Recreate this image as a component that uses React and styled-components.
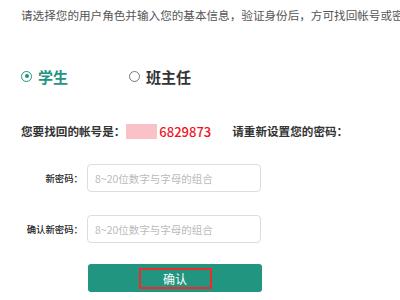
import React, { useState } from "react";
import styled, { createGlobalStyle } from "styled-components";

const GlobalStyle = createGlobalStyle`
  html, body {
    margin: 0;
    padding: 0;
    background: #fff;
  }
  body {
    font-family: "Noto Sans CJK SC", "Noto Sans", sans-serif;
    color: #333;
  }
`;

export default function App() {
  const [role, setRole] = useState("student");

  return (
    <>
      <GlobalStyle />
      <Page>
        <Intro>请选择您的用户角色并输入您的基本信息，验证身份后，方可找回帐号或密码。</Intro>

        <RoleRow>
          <RoleOption active={role === "student"} onClick={() => setRole("student")}>
            <Radio active={role === "student"} />
            学生
          </RoleOption>
          <RoleOption active={role === "teacher"} onClick={() => setRole("teacher")}>
            <Radio active={role === "teacher"} />
            班主任
          </RoleOption>
        </RoleRow>

        <AccountRow>
          <span>您要找回的帐号是：</span>
          <Account>
            <Masked />
            6829873
          </Account>
          <span>请重新设置您的密码：</span>
        </AccountRow>

        <Form>
          <Field>
            <Label>新密码：</Label>
            <Input type="password" placeholder="8~20位数字与字母的组合" />
          </Field>
          <Field>
            <Label>确认新密码：</Label>
            <Input type="password" placeholder="8~20位数字与字母的组合" />
          </Field>
          <SubmitRow>
            <Submit>
              <Highlight>确认</Highlight>
            </Submit>
          </SubmitRow>
        </Form>
      </Page>
    </>
  );
}

const Page = styled.div`
  width: 400px;
  height: 300px;
  overflow: hidden;
  padding: 7px 0 0 21px;
  box-sizing: border-box;
`;

const Intro = styled.p`
  margin: 0;
  font-size: 11.6px;
  line-height: 16px;
  color: #555;
  white-space: nowrap;
`;

const RoleRow = styled.div`
  display: flex;
  align-items: center;
  margin-top: 43px;
  height: 20px;
`;

const RoleOption = styled.label`
  display: flex;
  align-items: center;
  width: 108px;
  font-size: 15px;
  font-weight: 700;
  color: ${(p) => (p.active ? "#21957f" : "#333")};
  cursor: pointer;
`;

const Radio = styled.span`
  box-sizing: border-box;
  width: 11px;
  height: 11px;
  border-radius: 50%;
  border: 1.5px solid ${(p) => (p.active ? "#21957f" : "#777")};
  margin-right: 6px;
  display: flex;
  align-items: center;
  justify-content: center;
  &::after {
    content: "";
    width: 4px;
    height: 4px;
    border-radius: 50%;
    background: ${(p) => (p.active ? "#21957f" : "transparent")};
  }
`;

const AccountRow = styled.div`
  display: flex;
  align-items: center;
  margin-top: 37px;
  height: 16px;
  font-size: 11.6px;
  font-weight: 700;
  color: #333;
  white-space: nowrap;
`;

const Account = styled.span`
  display: flex;
  align-items: center;
  color: #f0141e;
  font-size: 13px;
  font-weight: 500;
  margin-right: 21px;
`;

const Masked = styled.span`
  display: inline-block;
  width: 31px;
  height: 15px;
  margin: 0 2px 0 1px;
  background: #f9c2c8;
  filter: blur(0.6px);
`;

const Form = styled.div`
  display: flex;
  flex-direction: column;
  margin-top: 25px;
  margin-left: -21px;
`;

const Field = styled.div`
  display: flex;
  align-items: center;
  gap: 4px;
  margin-bottom: 23px;
`;

const Label = styled.span`
  width: 83px;
  text-align: right;
  font-size: 9.4px;
  font-weight: 500;
  color: #222;
`;

const Input = styled.input`
  box-sizing: border-box;
  width: 174px;
  height: 28px;
  border: 1px solid #ddd;
  border-radius: 4px;
  padding: 0 7px;
  font-family: inherit;
  font-size: 10.5px;
  outline: none;
  &::placeholder {
    color: #bbb;
  }
`;

const SubmitRow = styled.div`
  display: flex;
  padding-left: 88px;
  margin-top: -2px;
`;

const Submit = styled.button`
  width: 174px;
  height: 28px;
  border: none;
  border-radius: 3px;
  background: #21957f;
  padding: 0;
  display: flex;
  align-items: center;
  justify-content: center;
  cursor: pointer;
`;

const Highlight = styled.span`
  box-sizing: border-box;
  width: 73px;
  height: 21px;
  border: 2px solid #ee2a2a;
  display: flex;
  align-items: center;
  justify-content: center;
  color: #fff;
  font-family: "Noto Sans CJK SC", sans-serif;
  font-size: 12px;
`;
